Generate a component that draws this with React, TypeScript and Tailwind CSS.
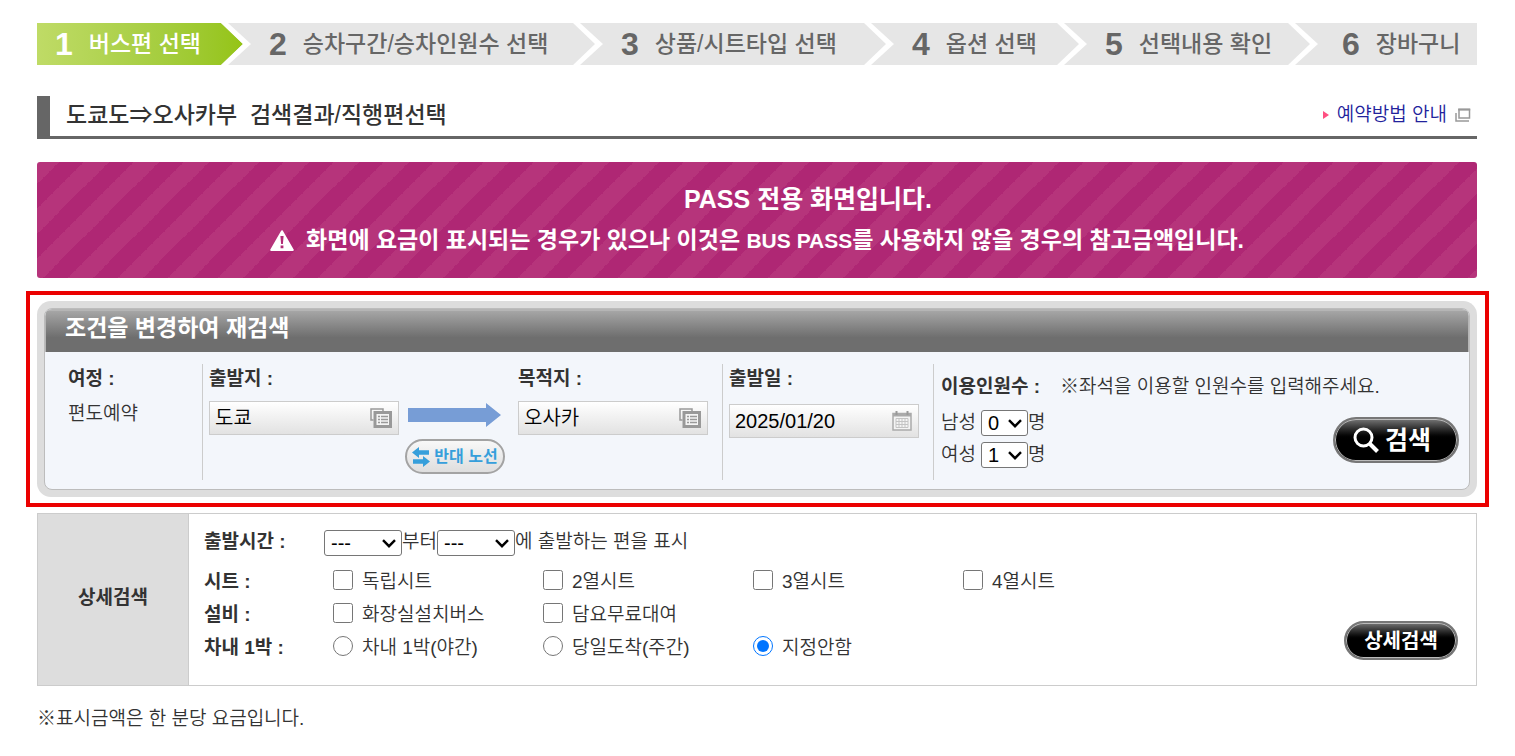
import type { ReactNode } from "react";

const steps = [
  "버스편 선택",
  "승차구간/승차인원수 선택",
  "상품/시트타입 선택",
  "옵션 선택",
  "선택내용 확인",
  "장바구니",
];

const optionRows = [
  {
    title: "시트 :",
    type: "checkbox",
    name: "seat",
    items: ["독립시트", "2열시트", "3열시트", "4열시트"],
  },
  {
    title: "설비 :",
    type: "checkbox",
    name: "facility",
    items: ["화장실설치버스", "담요무료대여"],
  },
  {
    title: "차내 1박 :",
    type: "radio",
    name: "overnight",
    items: ["차내 1박(야간)", "당일도착(주간)", "지정안함"],
  },
];

export default function App() {
  return (
    <div className="bg-white pt-[23px] pr-[38px] pb-6 pl-[37px] font-['Liberation_Sans','Noto_Sans_CJK_KR',sans-serif] text-[19px] leading-6 font-[350] text-[#333]">
      <StepBar />

      <header className="mt-[31px] flex h-[43px] items-center justify-between border-b-3 border-l-13 border-[#666] pr-[6px] pb-[3px] pl-4">
        <h1 className="text-[23px] font-medium whitespace-pre">
          도쿄도⇒오사카부  검색결과/직행편선택
        </h1>
        <a href="#guide" className="flex items-center text-[#22229c]">
          <svg viewBox="0 0 6 8" className="mr-2 h-2 w-[6px]">
            <path d="M0 0 6 4 0 8Z" fill="#ff4f81" />
          </svg>
          예약방법 안내
          <svg viewBox="0 0 16 14" className="ml-2 h-[14px] w-4" fill="none" stroke="#999">
            <rect x="4" y="1.5" width="10.5" height="8.5" strokeWidth="1.5" />
            <path d="M3.2 1.5h12" strokeWidth="2" />
            <path d="M1 5v8h13" strokeWidth="1.5" />
          </svg>
        </a>
      </header>

      <PassBanner />
      <SearchPanel />
      <DetailSearch />

      <p className="mt-[21px]">※표시금액은 한 분당 요금입니다.</p>
    </div>
  );
}

function StepBar() {
  return (
    <ol className="grid h-[42px] grid-cols-[214fr_352fr_291fr_193fr_231fr_159fr]">
      {steps.map((label, i) => (
        <li
          key={label}
          className={`flex items-center justify-between pl-[18px] whitespace-nowrap last:pl-6 ${
            i === 0
              ? "bg-linear-to-r from-[#bfdb66] to-[#93c30b] text-white"
              : "bg-[#e6e6e6] text-[#666]"
          }`}
        >
          <span className="flex items-center gap-4">
            <span className="text-[32px] leading-[42px] font-bold">{i + 1}</span>
            <span className="text-[23px] font-medium">{label}</span>
          </span>
          {i < steps.length - 1 && (
            <svg viewBox="0 0 30 42" className="h-[42px] w-[30px] shrink-0">
              <path d="M0 0H30V42H0L22 21Z" fill="#e6e6e6" />
              <path d="M0 0H7L30 21 7 42H0L22 21Z" fill="#fff" />
            </svg>
          )}
        </li>
      ))}
    </ol>
  );
}

function PassBanner() {
  return (
    <section className="mt-[23px] flex h-[116px] flex-col items-center justify-center gap-[9px] rounded-[3px] bg-[#b6347b] bg-[linear-gradient(-45deg,#af2774_25%,transparent_25%,transparent_50%,#af2774_50%,#af2774_75%,transparent_75%)] bg-size-[50px_50px] bg-position-[-3px_0] font-bold text-white">
      <p className="pl-[102px] text-[25px] leading-8">PASS 전용 화면입니다.</p>
      <p className="flex items-center gap-3 text-[23px] leading-8">
        <svg viewBox="0 0 24 21" className="h-[21px] w-6">
          <path d="M12 1.2 22.8 20H1.2Z" fill="#fff" stroke="#fff" strokeWidth="2" strokeLinejoin="round" />
          <path d="M10.4 6h3.2l-.7 8h-1.8ZM10.6 15.6h2.8v2.6h-2.8Z" fill="#b12c76" />
        </svg>
        <span>
          화면에 요금이 표시되는 경우가 있으나 이것은{" "}
          <span className="text-[21px]">BUS PASS</span>를 사용하지 않을 경우의 참고금액입니다.
        </span>
      </p>
    </section>
  );
}

function SearchPanel() {
  return (
    <section className="-mr-3 -ml-[11px] mt-[13px] border-4 border-[#eb0000] pt-[6px] pr-2 pb-[6px] pl-[7px]">
      <form className="rounded-[14px] bg-[#ddd] p-[7px]" onSubmit={(e) => e.preventDefault()}>
        <div className="overflow-hidden rounded-lg border border-[#bcbcbc] bg-[#f3f6fb]">
          <h2 className="h-[43px] border-x border-t-2 border-[#b5b5b5] bg-linear-to-b from-[#a6a6a6] to-[#6e6e6e] to-65% pl-[19px] text-[23px] leading-[34px] font-bold text-white">
            조건을 변경하여 재검색
          </h2>
          <div className="flex h-[137px] pt-3 pb-[9px]">
            <div className="w-[157px] pt-[3px] pl-[23px]">
              <p className="font-bold">여정 :</p>
              <p className="mt-[11px]">편도예약</p>
            </div>
            <div className="flex w-[520px] border-l border-[#ccc] pt-[3px] pl-[6px]">
              <PickerField id="from" label="출발지 :" value="도쿄" icon={<ListIcon />} />
              <div className="flex w-[119px] flex-col items-center pt-[35px] pr-[7px]">
                <svg viewBox="0 0 94 26" className="h-[26px] w-[94px]">
                  <path d="M0 6H78V1L93 13 78 25V20H0Z" fill="#779dd6" />
                </svg>
                <button
                  type="button"
                  className="mt-[11px] flex h-[35px] w-[100px] items-center justify-center gap-1 rounded-full border-2 border-[#a3a3a3] bg-linear-to-b from-[#f8f8f8] to-[#dedede] text-base font-bold whitespace-nowrap text-[#369fdb]"
                >
                  <svg viewBox="0 0 18 20" className="h-5 w-[18px] shrink-0" fill="#369fdb">
                    <path d="M0 5.5 7 0v3.2h10v4.6H7V11ZM18 14.5 11 20v-3.2H1v-4.6h10V9Z" />
                  </svg>
                  반대 노선
                </button>
              </div>
              <PickerField id="to" label="목적지 :" value="오사카" icon={<ListIcon />} />
            </div>
            <div className="w-[211px] border-l border-[#ccc] pt-[3px] pl-[6px]">
              <PickerField id="date" label="출발일 :" value="2025/01/20" icon={<CalendarIcon />} low />
            </div>
            <div className="flex-1 border-l border-[#ccc] pt-[11px] pl-[7px]">
              <p>
                <span className="mr-5 font-bold">이용인원수 :</span>
                ※좌석을 이용할 인원수를 입력해주세요.
              </p>
              <div className="flex justify-between pr-[10px]">
                <div className="mt-3 space-y-2">
                  <PeopleSelect id="male" label="남성" value="0" />
                  <PeopleSelect id="female" label="여성" value="1" />
                </div>
                <PillButton className="mt-[18px] h-[46px] w-[126px] pr-2 text-[25px]">
                  <svg viewBox="0 0 26 26" className="size-[26px] shrink-0" fill="none" stroke="#fff">
                    <circle cx="10.5" cy="10.5" r="8.5" strokeWidth="3" />
                    <path d="m16.5 16.5 8 8" strokeWidth="4" />
                  </svg>
                  검색
                </PillButton>
              </div>
            </div>
          </div>
        </div>
      </form>
    </section>
  );
}

function PickerField({
  id,
  label,
  value,
  icon,
  low,
}: {
  id: string;
  label: string;
  value: string;
  icon: ReactNode;
  low?: boolean;
}) {
  return (
    <div className="w-[190px]">
      <label htmlFor={id} className="block font-bold">
        {label}
      </label>
      <div
        className={`flex h-[34px] items-center border border-[#ccc] bg-linear-to-b from-white to-[#e2e2e2] pr-[6px] pl-[5px] ${
          low ? "mt-[13px]" : "mt-[10px]"
        }`}
      >
        <input
          id={id}
          defaultValue={value}
          readOnly
          className="w-full min-w-0 text-xl text-black outline-none"
        />
        {icon}
      </div>
    </div>
  );
}

function ListIcon() {
  return (
    <svg viewBox="0 0 22 20" className="h-5 w-[22px] shrink-0" fill="none" stroke="#999">
      <path d="M3.5 12H1V1h12v2" strokeWidth="1.5" />
      <rect x="5" y="4.5" width="15.5" height="14" fill="#f4f4f4" strokeWidth="3" />
      <path d="M8 8.5h2m1 0h7M8 11.5h2m1 0h7M8 14.5h2m1 0h7" strokeWidth="1.5" />
    </svg>
  );
}

function CalendarIcon() {
  return (
    <svg viewBox="0 0 20 20" className="size-5 shrink-0" fill="none" stroke="#aaa">
      <rect x="1" y="2.5" width="18" height="16.5" fill="#f4f4f4" strokeWidth="1.5" />
      <path d="M1 4h18" strokeWidth="3" />
      <path d="M4.5 0v4M15.5 0v4" stroke="#999" strokeWidth="2" />
      <path
        d="M4 7.5h12v9H4ZM4 10.5h12M4 13.5h12M7 7.5v9M10 7.5v9M13 7.5v9"
        stroke="#c4c4c4"
      />
    </svg>
  );
}

function SelectBox({
  id,
  label,
  options,
  value,
  className,
}: {
  id: string;
  label?: string;
  options: string[];
  value: string;
  className: string;
}) {
  return (
    <span className="relative inline-flex">
      <select
        id={id}
        aria-label={label}
        defaultValue={value}
        className={`h-[26px] appearance-none rounded-[3px] border border-[#767676] bg-white pl-[6px] text-xl leading-6 text-black ${className}`}
      >
        {options.map((o) => (
          <option key={o}>{o}</option>
        ))}
      </select>
      <svg
        viewBox="0 0 14 9"
        className="pointer-events-none absolute top-[9px] right-[6px] h-[9px] w-[14px]"
        fill="none"
        stroke="#000"
        strokeWidth="2.4"
      >
        <path d="m1 1.2 6 6 6-6" />
      </svg>
    </span>
  );
}

function PeopleSelect({ id, label, value }: { id: string; label: string; value: string }) {
  return (
    <div className="flex h-6 items-center">
      <label htmlFor={id} className="mr-[5px]">
        {label}
      </label>
      <SelectBox id={id} value={value} options={["0", "1", "2", "3", "4"]} className="w-[47px]" />
      <span>명</span>
    </div>
  );
}

function PillButton({ className, children }: { className: string; children: ReactNode }) {
  return (
    <button
      type="submit"
      className={`flex items-center justify-center gap-[6px] rounded-full border-2 border-[#777] bg-linear-to-b from-[#777] to-black to-50% font-bold whitespace-nowrap text-white inset-ring inset-ring-[#bbb] ${className}`}
    >
      {children}
    </button>
  );
}

function DetailSearch() {
  const times = ["---", "06:00", "12:00", "18:00"];

  return (
    <form
      className="mt-[6px] flex min-h-[173px] border border-[#ccc]"
      onSubmit={(e) => e.preventDefault()}
    >
      <h2 className="flex w-[151px] items-center justify-center border-r border-[#ccc] bg-[#ddd] pb-1 font-bold">
        상세검색
      </h2>
      <div className="flex flex-1 items-end justify-between pr-[18px] pb-[25px] pl-[15px]">
        <div>
          <div className="mb-[14px] flex items-start">
            <span className="w-[120px] font-bold">출발시간 :</span>
            <SelectBox id="time-from" label="출발시간 시작" value="---" options={times} className="w-[78px]" />
            부터
            <SelectBox id="time-to" label="출발시간 끝" value="---" options={times} className="w-[78px]" />
            에 출발하는 편을 표시
          </div>
          <div className="space-y-[9px]">
            {optionRows.map((row) => (
              <fieldset key={row.name} className="flex">
                <legend className="float-left w-[129px] font-bold">{row.title}</legend>
                {row.items.map((item) => (
                  <label key={item} className="flex w-[210px] items-start gap-[9px]">
                    <input
                      type={row.type}
                      name={row.name}
                      defaultChecked={item === "지정안함"}
                      className="size-5"
                    />
                    {item}
                  </label>
                ))}
              </fieldset>
            ))}
          </div>
        </div>
        <PillButton className="h-[39px] w-[114px] text-xl">상세검색</PillButton>
      </div>
    </form>
  );
}
